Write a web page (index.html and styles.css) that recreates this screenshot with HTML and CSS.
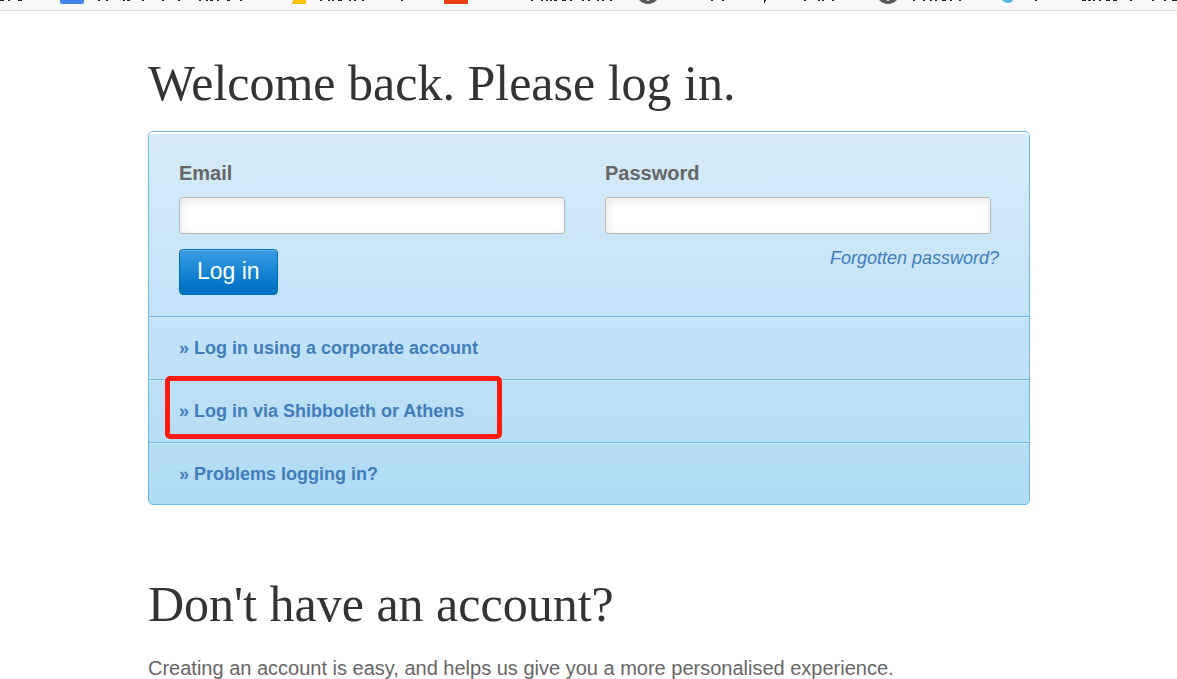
FILE: index.html
```
<!DOCTYPE html>
<html lang="en">
<head>
    <meta charset="UTF-8">
    <meta name="viewport" content="width=device-width, initial-scale=1.0">
    <title>Log in</title>
    <link rel="stylesheet" href="styles.css">
</head>
<body>
    <div class="bookmarks">
        <svg width="1177" height="10" viewBox="0 0 1177 10" aria-hidden="true">
            <path d="M60 0h24v2q0 2-2 2H62q-2 0-2-2z" fill="#4387ee"/>
            <path d="M293 0h13v4h-14V2h1z" fill="#fbc10b"/>
            <path d="M444 0h24v4h-24z" fill="#e63c17"/>
            <path d="M639 0q9 8 18 0h-7l-2 1-2-1z" fill="#555"/>
            <path d="M879 0q9 8 18 0h-7l-2 1-2-1z" fill="#555"/>
            <path d="M1002 0h11q-1 3-5 3t-6-3z" fill="#5bb8dc"/>
            <path stroke="#222" stroke-width="1" fill="none" d="M0 .5h4m4 0h2m8 0h4M98 .5h2m6 0h2m15 0h2m2 0h3m12 0h2m18 0h2m14 0h2m19 0h2m5 0h2m2 0h3m4 0h2m8 0h3m10 0h2M320 .5h2m6 0h2m2 0h2m4 0h4m7 0h2m3 0h2m6 0h2M401 .5h2M531 .5h2m8 0h2m3 0h2m2 0h2m2 0h3m5 0h4m4 0h2m10 0h2m4 0h2m7 0h2m3 0h2m6 0h2M711 .5h2m9 0h2M764 .5h2M804 .5h2m12 0h2m2 0h2m8 0h2M913 .5h2m8 0h2m5 0h2m3 0h2m5 0h4m4 0h2m7 0h2M1035 .5h2M1082 .5h4m2 0h3m2 0h2m4 0h2m5 0h4m3 0h4m13 0h2m20 0h2m10 0h2m6 0h5"/>
            <path stroke="#222" stroke-width="1" fill="none" d="M764.500 0v3"/>
        </svg>
    </div>

    <main class="content">
        <h1>Welcome back. Please log in.</h1>

        <div class="login-panel">
            <form class="login-form">
                <div class="fields">
                    <div class="field">
                        <label for="email">Email</label>
                        <input type="email" id="email">
                    </div>
                    <div class="field">
                        <label for="password">Password</label>
                        <input type="password" id="password">
                    </div>
                </div>
                <div class="actions">
                    <button type="submit">Log in</button>
                    <a class="forgotten" href="#">Forgotten password?</a>
                </div>
            </form>
            <ul class="options">
                <li><a href="#">» Log in using a corporate account</a></li>
                <li class="marked"><a href="#">» Log in via Shibboleth or Athens</a></li>
                <li><a href="#">» Problems logging in?</a></li>
            </ul>
        </div>

        <h2>Don't have an account?</h2>
        <p>Creating an account is easy, and helps us give you a more personalised experience.</p>
    </main>
</body>
</html>
```
FILE: styles.css
```
*{
    margin: 0;
    padding: 0;
    box-sizing: border-box;
}
body{
    background-color: #fff;
    color: #666;
    font-family: "Liberation Sans", Arial, sans-serif;
    font-size: 20px;
    line-height: 24px;
}
a{
    color: #417dba;
    text-decoration: none;
}
ul{
    list-style: none;
}
.bookmarks{
    height: 11px;
    overflow: hidden;
    background-color: #f9f9f9;
    border-bottom: 1px solid #ddd;
}
.bookmarks svg{
    display: block;
}
.content{
    padding: 40px 147px 0 148px;
}
h1, h2{
    color: #333;
    font-family: "Liberation Serif", Georgia, serif;
    font-size: 50px;
    font-weight: normal;
    line-height: 64px;
}
.login-panel{
    margin: 16px 0 67px;
    border: 1px solid #6fb9ea;
    border-radius: 5px;
    background: linear-gradient(#d7ebf9, #b0dbf5);
    box-shadow: inset 0 2px #fff;
}
.login-form{
    padding: 29px 30px 21px;
}
.fields{
    display: grid;
    grid-template-columns: 1fr 1fr;
    gap: 40px;
    padding-right: 8px;
}
.field label{
    display: block;
    margin-bottom: 12px;
    font-weight: bold;
}
.field input{
    display: block;
    width: 100%;
    height: 37px;
    padding: 0 10px;
    border: 1px solid #b8b8b8;
    border-radius: 3px;
    background-color: #fff;
    box-shadow: inset 2px 3px 8px #e8e8e8;
    font-size: 18px;
}
.actions{
    display: flex;
    justify-content: space-between;
    align-items: flex-start;
    margin-top: 15px;
}
.actions button{
    height: 46px;
    padding: 0 17px 2px;
    border: 1px solid #0070ba;
    border-radius: 4px;
    background: linear-gradient(#3a9ee5, #0073c5 85%);
    box-shadow: inset 0 1px #68b5eb;
    color: #fff;
    font-family: inherit;
    font-size: 23px;
}
.forgotten{
    margin-top: -3px;
    font-size: 18px;
    font-style: italic;
}
.options li{
    position: relative;
    padding: 19px 30px;
    border-top: 1px solid #6fb9ea;
    box-shadow: inset 0 1px #d5ecfa;
    font-size: 18px;
    font-weight: bold;
}
.options li:last-child{
    padding-bottom: 18px;
}
/* red frame around the institutional login */
.marked::after{
    content: "";
    position: absolute;
    z-index: 1;
    top: -4px;
    left: 16px;
    box-sizing: border-box;
    width: 337px;
    height: 63px;
    border: 5px solid #ff1c0e;
    border-radius: 5px;
    pointer-events: none;
}
p{
    margin-top: 20px;
}
```
